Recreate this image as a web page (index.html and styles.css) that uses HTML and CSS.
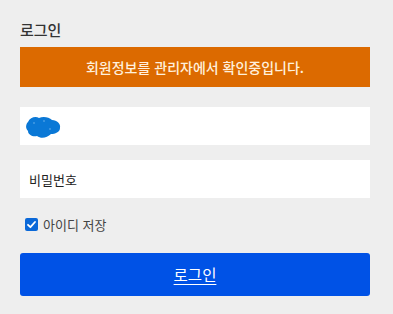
FILE: index.html
```html
<!DOCTYPE html>
<html lang="ko">
<head>
<meta charset="utf-8">
<title>로그인</title>
<link rel="stylesheet" href="styles.css">
</head>
<body>
<div class="login">
  <h1 class="title">로그인</h1>
  <div class="notice">회원정보를 관리자에서 확인중입니다.</div>
  <div class="field id-field">
    <svg class="blot" width="36" height="24" viewBox="0 0 36 24">
      <path d="M3 7 C5 2 11 1 14 3 C18 1 24 2 27 5 C32 5 36 9 35 13 C35 17 30 19 26 19 C22 23 16 24 12 21 C8 22 3 20 3 16 C0 13 1 9 3 7 Z" fill="#0a78d6"/>
      <circle cx="9" cy="8" r="0.8" fill="#6fb3ec"/>
      <circle cx="19" cy="6" r="0.8" fill="#6fb3ec"/>
      <circle cx="25" cy="14" r="0.8" fill="#6fb3ec"/>
    </svg>
  </div>
  <div class="field pw-field"><span class="placeholder">비밀번호</span></div>
  <label class="remember">
    <span class="check">
      <svg width="13" height="13" viewBox="0 0 13 13"><rect x="0" y="0" width="13" height="13" rx="2" fill="#0a68d8"/><path d="M3 6.8 L5.4 9.2 L10 4" fill="none" stroke="#fff" stroke-width="1.8" stroke-linecap="round" stroke-linejoin="round"/></svg>
    </span>
    <span class="remember-text">아이디 저장</span>
  </label>
  <button class="submit"><span class="submit-text">로그인</span></button>
</div>
</body>
</html>
```

FILE: styles.css
```css
html, body {
  margin: 0;
  padding: 0;
  background: #eeeeee;
}
body {
  font-family: "Noto Sans CJK KR", "Noto Sans", sans-serif;
  width: 393px;
  height: 314px;
  overflow: hidden;
}
.login {
  display: flex;
  flex-direction: column;
  padding: 20px 23px 0 20px;
}
.title {
  margin: 0;
  font-size: 15px;
  line-height: 20px;
  font-weight: 500;
  color: #333333;
}
.notice {
  margin-top: 7px;
  height: 40px;
  background: #dc6a00;
  color: #fff0dc;
  font-size: 14px;
  font-weight: 500;
  display: flex;
  align-items: center;
  justify-content: center;
}
.field {
  background: #ffffff;
  height: 38px;
  display: flex;
  align-items: center;
  padding-left: 9px;
}
.id-field {
  margin-top: 20px;
  padding-left: 5px;
}
.blot {
  display: block;
  margin-top: 1px;
}
.pw-field {
  margin-top: 15px;
}
.placeholder {
  font-size: 13px;
  color: #222222;
}
.remember {
  margin-top: 16px;
  height: 20px;
  display: flex;
  align-items: center;
  padding-left: 5px;
  gap: 5px;
}
.check {
  display: flex;
  width: 13px;
  height: 13px;
}
.remember-text {
  font-size: 13px;
  color: #444444;
}
.submit {
  margin-top: 19px;
  height: 43px;
  border: none;
  border-radius: 3px;
  background: #0052e6;
  color: #ffffff;
  font-family: inherit;
  font-size: 15.5px;
  padding: 0 0 2px 0;
}
.submit-text {
  text-decoration: underline;
  text-underline-offset: 3px;
}
```
